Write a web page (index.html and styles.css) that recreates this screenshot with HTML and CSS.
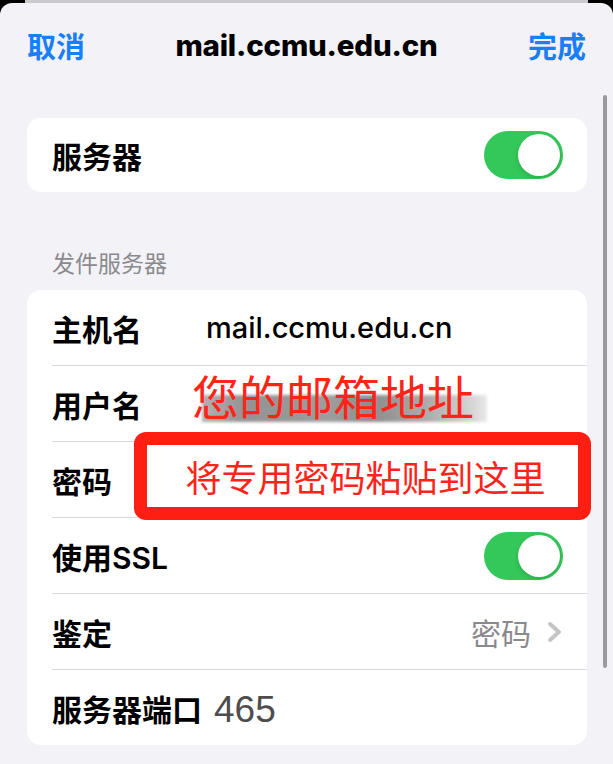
FILE: index.html
```html
<!DOCTYPE html>
<html lang="zh-CN">
<head>
  <meta charset="UTF-8" />
  <meta name="viewport" content="width=device-width, initial-scale=1.0"/>
  <title>mail.ccmu.edu.cn</title>
  <link rel="stylesheet" href="styles.css">
</head>
<body>
  <div class="backdrop"></div>

  <div class="sheet">
    <header class="navbar">
      <a class="nav-btn">取消</a>
      <h1 class="nav-title">mail.ccmu.edu.cn</h1>
      <a class="nav-btn done">完成</a>
    </header>

    <div class="scroll-indicator"></div>

    <section class="group first">
      <div class="row">
        <span class="label">服务器</span>
        <span class="switch"><span class="knob"></span></span>
      </div>
    </section>

    <div class="group-title">发件服务器</div>

    <section class="group annotated">
      <div class="row">
        <span class="label fixed">主机名</span>
        <span class="value">mail.ccmu.edu.cn</span>
      </div>
      <div class="row">
        <span class="label fixed">用户名</span>
      </div>
      <div class="row">
        <span class="label fixed">密码</span>
      </div>
      <div class="row">
        <span class="label">使用SSL</span>
        <span class="switch"><span class="knob"></span></span>
      </div>
      <div class="row">
        <span class="label">鉴定</span>
        <span class="detail">
          密码
          <svg class="chevron" width="16" height="22" viewBox="0 0 16 22">
            <polyline points="3,3 12,11 3,19" fill="none" stroke="#c4c4c8" stroke-width="4" stroke-linecap="round" stroke-linejoin="round"/>
          </svg>
        </span>
      </div>
      <div class="row">
        <span class="label">服务器端口</span>
        <span class="port">465</span>
      </div>

      <!-- annotations drawn over the screenshot -->
      <div class="note-email">
        <span class="smudge"></span>
        <span class="note-text">您的邮箱地址</span>
      </div>
      <div class="note-box">将专用密码粘贴到这里</div>
    </section>
  </div>
</body>
</html>
```

FILE: styles.css
```css
body {
  margin: 0;
  padding: 0;
  background-color: #000;
  font-family: Inter, "Noto Sans CJK SC", sans-serif;
  overflow: hidden;
}

.backdrop {
  height: 3px;
  margin: 0 25px;
  background-color: #c9c9ce;
}

.sheet {
  position: relative;
  height: 761px;
  background-color: #f2f2f7;
  border-radius: 12px 12px 0 0;
}

.navbar {
  display: grid;
  grid-template-columns: 1fr auto 1fr;
  align-items: center;
  height: 84px;
  padding: 0 27px;
}

.nav-btn {
  color: #1a7ef5;
  font-size: 29px;
  font-weight: 600;
}

.nav-btn.done {
  justify-self: end;
}

.nav-title {
  margin: 0;
  font-size: 29.5px;
  font-weight: 800;
  color: #000;
  letter-spacing: -0.2px;
}

.scroll-indicator {
  position: absolute;
  right: 6px;
  top: 92px;
  width: 4px;
  height: 573px;
  border-radius: 2px;
  background-color: #9a9a9f;
}

.group {
  margin: 0 26px 0 27px;
  background-color: #fff;
  border-radius: 14px;
}

.group.first {
  margin-top: 31px;
}

.group.annotated {
  position: relative;
}

.group-title {
  margin: 59px 0 0 52px;
  padding-bottom: 13px;
  font-size: 23px;
  line-height: 26px;
  color: #8a8a8e;
}

.row {
  display: flex;
  align-items: center;
  height: 74px;
  margin-left: 25px;
  padding-right: 24px;
  border-bottom: 1px solid #d9d9dd;
}

.group.first .row {
  height: 74px;
  border-bottom: none;
}

.annotated .row {
  height: 75px;
}

.annotated .row:nth-child(6) {
  border-bottom: none;
}

.label {
  font-size: 30px;
  font-weight: 600;
  color: #000;
}

.label.fixed {
  min-width: 154px;
}

.value {
  font-size: 29px;
  font-weight: 500;
  color: #000;
}

.detail {
  margin-left: auto;
  display: flex;
  align-items: center;
  gap: 16px;
  font-size: 30px;
  color: #8a8a8e;
}

.port {
  margin-left: 12px;
  margin-top: 4px;
  font-family: "Liberation Sans", sans-serif;
  font-size: 37px;
  color: #4d4d4d;
}

.switch {
  margin-left: auto;
  position: relative;
  width: 79px;
  height: 48px;
  border-radius: 24px;
  background-color: #34c759;
}

.knob {
  position: absolute;
  right: 3px;
  top: 3px;
  width: 42px;
  height: 42px;
  border-radius: 50%;
  background-color: #fff;
  box-shadow: 0 2px 5px rgba(0, 0, 0, 0.15);
}

.note-email {
  position: absolute;
  left: 165px;
  top: 84px;
}

.smudge {
  position: absolute;
  left: 10px;
  top: 21px;
  width: 285px;
  height: 27px;
  background: linear-gradient(90deg, #a5a5a5, #808080 15%, #8c8c8c 45%, #7a7a7a 60%, #a0a0a0 80%, #cfcfcf 95%, #e6e6e6);
  filter: blur(1.5px);
  opacity: 0.85;
}

.note-text {
  position: relative;
  font-size: 47px;
  line-height: 47px;
  color: #ff2419;
}

.note-box {
  position: absolute;
  left: 107px;
  top: 142px;
  width: 425px;
  height: 62px;
  border: 13px solid #ff1e12;
  border-radius: 12px;
  background-color: #fff;
  display: flex;
  align-items: center;
  justify-content: center;
  padding-left: 6px;
  font-size: 36px;
  color: #ff2419;
}
```
